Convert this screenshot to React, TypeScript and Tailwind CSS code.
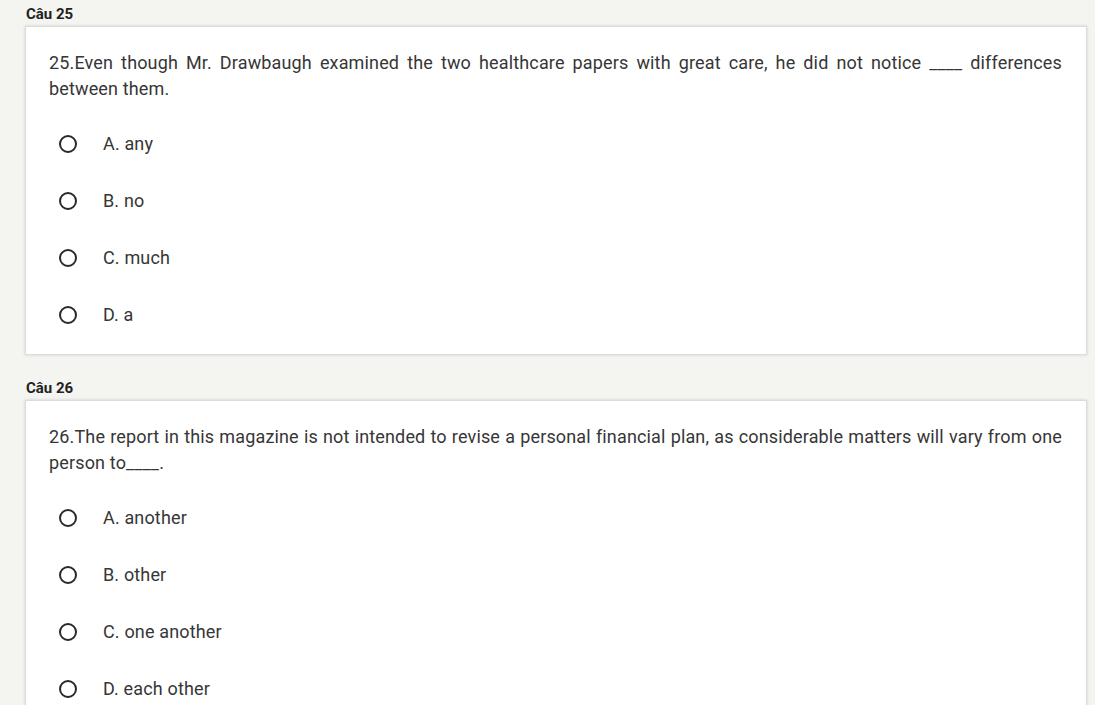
import React from "react";

const questions = [
  {
    title: "Câu 25",
    text: "25.Even though Mr. Drawbaugh examined the two healthcare papers with great care, he did not notice ____ differences between them.",
    options: ["A. any", "B. no", "C. much", "D. a"],
  },
  {
    title: "Câu 26",
    text: "26.The report in this magazine is not intended to revise a personal financial plan, as considerable matters will vary from one person to____.",
    options: ["A. another", "B. other", "C. one another", "D. each other"],
  },
];

export default function App() {
  return (
    <div
      className="min-h-[705px] w-[1095px] overflow-hidden bg-[#f4f4f1] pl-[25px] pr-[8px] pt-[4px]"
      style={{ fontFamily: "Roboto, 'Liberation Sans', sans-serif" }}
    >
      {questions.map((q, i) => (
        <div key={i} className={i > 0 ? "mt-[23px]" : ""}>
          <div className="h-[20px] pl-[1px] text-[15px] font-bold leading-[20px] text-[#222]">
            {q.title}
          </div>
          <div className="mt-[2px] border border-[#dcdcdc] bg-white pb-[11px] pl-[23px] pr-[24px] pt-[23px] shadow-[0_0_3px_rgba(0,0,0,0.15)]">
            <p className="text-justify text-[18px] leading-[26px] tracking-[0.15px] text-[#363636]">{q.text}</p>
            <div className="mt-[13px] flex flex-col">
              {q.options.map((o, j) => (
                <div key={j} className="flex h-[57px] items-center">
                  <span className="ml-[10px] h-[18px] w-[18px] rounded-full border-2 border-[#2a2a2a]" />
                  <span className="ml-[26px] text-[18px] leading-[26px] tracking-[0.15px] text-[#363636]">{o}</span>
                </div>
              ))}
            </div>
          </div>
        </div>
      ))}
    </div>
  );
}
